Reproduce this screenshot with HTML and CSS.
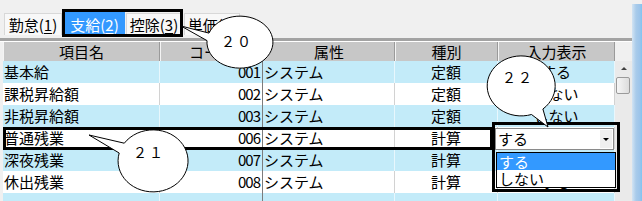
FILE: index.html
```html
<!DOCTYPE html>
<html lang="ja">
<head>
<meta charset="utf-8">
<link rel="stylesheet" href="styles.css">
</head>
<body>
<div class="screen">
  <div class="main">
    <div class="tabs">
      <div class="tab t1">勤怠(<u>1</u>)</div>
      <div class="tab t2 sel">支給(<u>2</u>)</div>
      <div class="tab t3">控除(<u>3</u>)</div>
      <div class="tab t4">単価(<u>4</u>)</div>
    </div>
    <div class="rule"></div>
    <div class="area">
      <div class="grid">
        <div class="hd">項目名</div>
        <div class="hd">コード</div>
        <div class="hd">属性</div>
        <div class="hd">種別</div>
        <div class="hd">入力表示</div>

        <div class="c b">基本給</div><div class="c b code">001</div><div class="c b">システム</div><div class="c b ctr">定額</div><div class="c b ctr">する</div>
        <div class="c w">課税昇給額</div><div class="c w code">002</div><div class="c w">システム</div><div class="c w ctr">定額</div><div class="c w ctr">しない</div>
        <div class="c b">非税昇給額</div><div class="c b code">003</div><div class="c b">システム</div><div class="c b ctr">定額</div><div class="c b ctr">しない</div>
        <div class="c w">普通残業</div><div class="c w code">006</div><div class="c w">システム</div><div class="c w ctr">計算</div><div class="c w ctr">する</div>
        <div class="c b">深夜残業</div><div class="c b code">007</div><div class="c b">システム</div><div class="c b ctr">計算</div><div class="c b ctr">する</div>
        <div class="c w">休出残業</div><div class="c w code">008</div><div class="c w">システム</div><div class="c w ctr">計算</div><div class="c w ctr">する</div>
        <div class="c b"></div><div class="c b code"></div><div class="c b"></div><div class="c b"></div><div class="c b"></div>
      </div>
      <div class="sb">
        <div class="sb-top"></div>
        <div class="sb-up"><span class="up-tri"></span></div>
        <div class="sb-thumb"></div>
      </div>
    </div>
  </div>
  <div class="stripe"></div>
</div>

<div class="combo">
  <span class="combo-text">する</span>
  <span class="combo-btn"><span class="down-tri"></span></span>
</div>
<div class="droplist">
  <div class="opt hi">する</div>
  <div class="opt">しない</div>
</div>

<div class="mark mark-tabs"></div>
<div class="mark mark-row"></div>
<div class="mark mark-combo"></div>

<svg class="callouts" width="642" height="201" viewBox="0 0 642 201">
  <path d="M 209.0 33.1 L 181 26 L 207.0 40.6 A 33 26 0 1 0 209.0 33.1 Z"/>
  <path d="M 124.3 143.2 L 89 135 L 119.2 153.0 A 35 31 0 1 0 124.3 143.2 Z"/>
  <path d="M 542.9 109.0 L 548 127 L 531.5 114.5 A 34 30 0 1 1 542.9 109.0 Z"/>
  <text x="237" y="47">２０</text>
  <text x="149" y="158">２１</text>
  <text x="518" y="83">２２</text>
</svg>
</body>
</html>
```

FILE: styles.css
```css
html, body {
  margin: 0;
  padding: 0;
}
body {
  width: 642px;
  height: 201px;
  overflow: hidden;
  position: relative;
  background: #f0f0f0;
  font-family: "Noto Sans CJK JP", "Noto Sans", sans-serif;
  font-size: 15px;
  color: #000;
}
.screen {
  display: flex;
  height: 201px;
}
.main {
  width: 632px;
  display: flex;
  flex-direction: column;
}
.stripe {
  width: 10px;
  margin-top: 4px;
  background: linear-gradient(to right, #d3e4f3 0, #a9cbea 40%, #9cc4ea 80%, #7cc6f4 100%);
}

/* tabs */
.tabs {
  height: 38px;
  box-sizing: border-box;
  display: flex;
  align-items: flex-end;
  padding-left: 4px;
  padding-bottom: 3px;
}
.tab {
  height: 22px;
  line-height: 21px;
  box-sizing: border-box;
  text-align: center;
  background: #f8f8f8;
  border: 1px solid #d8d8d8;
  border-bottom: none;
  white-space: nowrap;
}
.tab u {
  text-decoration-thickness: 1px;
  text-underline-offset: 2px;
}
.t1 { width: 58px; margin-right: 2px; }
.t2 { width: 61px; margin-right: 1px; }
.t3 { width: 56px; margin-right: 2px; }
.t4 { width: 56px; }
.tab.sel {
  height: 25px;
  padding-top: 3px;
  background: #3399ff;
  border-color: #3399ff;
  color: #fff;
}
.rule {
  height: 3px;
  background: #a3a3a3;
  border-bottom: 1px solid #fff;
}

/* grid */
.area {
  flex: 1;
  display: flex;
  min-height: 0;
}
.grid {
  width: 612px;
  margin-left: 3px;
  display: grid;
  grid-template-columns: 157px 103px 132px 103px 117px;
  grid-template-rows: 19px;
  grid-auto-rows: 22px;
  overflow: hidden;
}
.hd {
  background: #c7c7c7;
  text-align: center;
  line-height: 19px;
  border-left: 1px solid #f4f4f4;
  border-right: 1px solid #9a9a9a;
  box-sizing: border-box;
  white-space: nowrap;
}
.c {
  line-height: 22px;
  padding: 0 1px;
  white-space: nowrap;
  overflow: hidden;
  box-sizing: border-box;
  border-right: 1px solid #d2d2d2;
}
.c.b {
  background: #c3ebf9;
  border-right-color: #e8f7fd;
}
.c.w {
  background: #fff;
}
.c.code {
  text-align: right;
  padding-right: 2px;
  letter-spacing: -1px;
  border-right: 1px solid #7c7c7c;
}
.c.ctr {
  text-align: center;
}

/* scrollbar */
.sb {
  width: 17px;
  background: #eaeaea;
  display: flex;
  flex-direction: column;
}
.sb-top {
  height: 19px;
  background: #f0f0f0;
}
.sb-up {
  height: 15px;
  display: flex;
  align-items: center;
  justify-content: center;
}
.up-tri {
  width: 0;
  height: 0;
  border-left: 3px solid transparent;
  border-right: 3px solid transparent;
  border-bottom: 3px solid #404040;
}
.sb-thumb {
  height: 15px;
  margin: 1px 2px 0 1px;
  border: 1px solid #9a9a9a;
  border-radius: 2px;
  background: linear-gradient(to right, #f6f6f6, #dcdcdc);
}

/* combo + dropdown */
.combo {
  position: absolute;
  left: 495px;
  top: 128px;
  width: 119px;
  height: 22px;
  box-sizing: border-box;
  background: #fff;
  border: 1px solid #8a8a8a;
  display: flex;
  align-items: center;
  justify-content: space-between;
}
.combo-text {
  padding-left: 2px;
  line-height: 20px;
}
.combo-btn {
  width: 12px;
  height: 18px;
  margin-right: 1px;
  background: #efefef;
  display: flex;
  align-items: center;
  justify-content: center;
}
.down-tri {
  width: 0;
  height: 0;
  border-left: 3px solid transparent;
  border-right: 3px solid transparent;
  border-top: 3px solid #000;
}
.droplist {
  position: absolute;
  left: 496px;
  top: 152px;
  width: 120px;
  height: 36px;
  box-sizing: border-box;
  border: 1px solid #000;
  background: #fff;
}
.opt {
  height: 17px;
  line-height: 17px;
  padding-left: 2px;
}
.opt.hi {
  background: #3399ff;
  color: #fff;
}

/* annotation marks */
.mark {
  position: absolute;
  box-sizing: border-box;
  border: 3px solid #000;
}
.mark-tabs {
  left: 62px;
  top: 9px;
  width: 121px;
  height: 28px;
}
.mark-row {
  left: 3px;
  top: 127px;
  width: 490px;
  height: 23px;
}
.mark-combo {
  left: 492px;
  top: 122px;
  width: 128px;
  height: 70px;
}
.callouts {
  position: absolute;
  left: 0;
  top: 0;
}
.callouts path {
  fill: #fff;
  stroke: #000;
  stroke-width: 1;
}
.callouts text {
  font-family: "Noto Sans CJK JP", sans-serif;
  font-size: 14px;
  letter-spacing: 2px;
  text-anchor: middle;
  fill: #000;
}
```
